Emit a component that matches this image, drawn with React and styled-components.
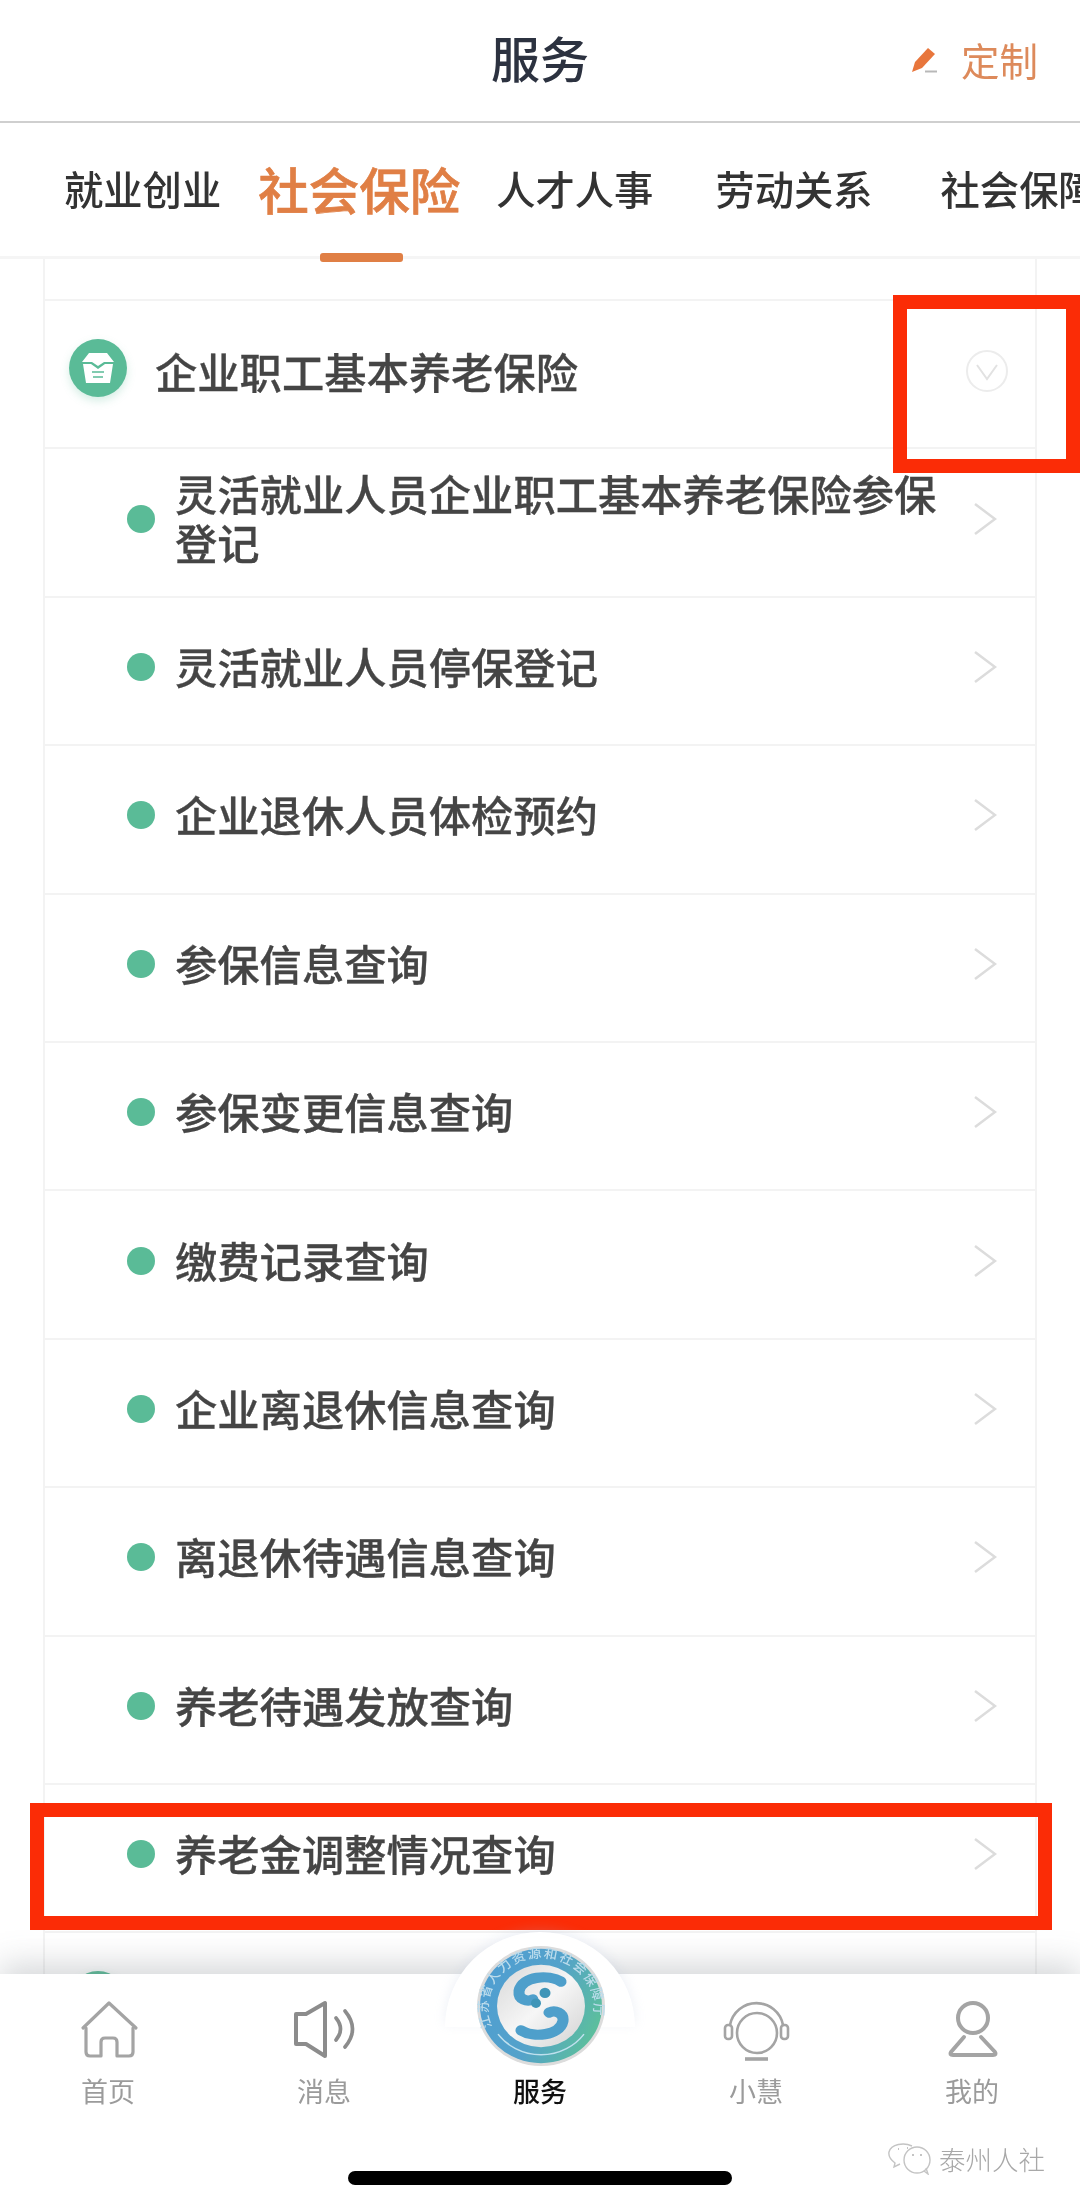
import React from "react";
import styled, { createGlobalStyle } from "styled-components";

const Global = createGlobalStyle`
  html, body { margin: 0; padding: 0; background: #fff; }
  * { box-sizing: border-box; }
  body { font-family: "Noto Sans CJK SC", "Noto Sans", sans-serif; }
`;

const Screen = styled.div`
  position: relative;
  width: 1080px;
  height: 2207px;
  overflow: hidden;
  background: #fff;
  filter: blur(0.5px);
`;

const Header = styled.header`
  position: relative;
  height: 123px;
  display: flex;
  align-items: center;
  justify-content: center;
  border-bottom: 2px solid #cfcfcf;
  padding-bottom: 8px;
`;

const Title = styled.h1`
  margin: 0;
  font-size: 49px;
  line-height: 60px;
  font-weight: 500;
  color: #2c3240;
`;

const Customize = styled.div`
  position: absolute;
  left: 911px;
  top: 33px;
  display: flex;
  align-items: center;
  gap: 24px;
  font-size: 38.5px;
  line-height: 52px;
  font-weight: 400;
  color: #dd8a5b;
`;

const TabBar = styled.nav`
  position: relative;
  height: 136px;
  border-bottom: 3px solid #f5f5f5;
`;

const TabStrip = styled.div`
  height: 100%;
  display: flex;
  align-items: center;
  padding: 0 0 3px 64px;
  overflow: hidden;
  white-space: nowrap;
`;

const Tab = styled.div`
  flex: none;
  margin-left: ${(p) => p.$gap}px;
  font-size: ${(p) => (p.$active ? 50.5 : 39.3)}px;
  line-height: 60px;
  font-weight: 500;
  -webkit-text-stroke: ${(p) => (p.$active ? 0.7 : 0)}px currentColor;
  color: ${(p) => (p.$active ? "#e07f45" : "#333")};
`;

const Indicator = styled.div`
  position: absolute;
  left: 320px;
  bottom: -6px;
  width: 83px;
  height: 9px;
  border-radius: 3px;
  background: #e07f45;
`;

const Card = styled.section`
  width: 994px;
  margin: 0 0 0 43px;
  border-left: 2px solid #f3f3f3;
  border-right: 2px solid #f3f3f3;
`;

const CardTop = styled.div`
  height: 42px;
  border-bottom: 2px solid #f3f3f3;
`;

const Row = styled.div`
  height: 148.4px;
  display: flex;
  align-items: center;
  padding: 0 38px 8px 82px;
  border-bottom: 2px solid #f3f3f3;
  font-size: 42.3px;
  line-height: 49px;
  font-weight: 500;
  -webkit-text-stroke: 0.3px currentColor;
  color: #454545;
`;

const SectionRow = styled(Row)`
  padding: 0 24px 8px 24px;
  gap: 28px;
`;

const SectionBadge = styled.span`
  flex: none;
  width: 58px;
  height: 58px;
  margin-top: -4px;
  border-radius: 50%;
  background: #5abb97;
  box-shadow: 0 4px 8px rgba(90, 187, 151, 0.25);
  display: flex;
  align-items: center;
  justify-content: center;
`;

const Dot = styled.span`
  flex: none;
  width: 28px;
  height: 28px;
  margin-right: 20px;
  border-radius: 50%;
  background: #5abb97;
`;

const Label = styled.span`
  flex: 1;
  padding-right: 16px;
  margin-bottom: 3px;
`;

const SectionLabel = styled(Label)`
  margin-bottom: 0;
`;

const Chevron = styled.svg`
  flex: none;
  width: 24px;
  height: 34px;
`;

const CircleChevron = styled.svg`
  flex: none;
  width: 44px;
  height: 44px;
  margin-top: 2px;
  margin-right: 2px;
`;

const BottomNav = styled.footer`
  position: absolute;
  left: 0;
  right: 0;
  bottom: 0;
  height: 233px;
  background: #fff;
  box-shadow: 0 -10px 30px rgba(105, 110, 120, 0.27);
`;

const Halo = styled.div`
  position: absolute;
  left: 445px;
  top: -42px;
  width: 190px;
  height: 95px;
  border-radius: 95px 95px 0 0;
  background: #fff;
  box-shadow: 0 -3px 12px rgba(170, 185, 215, 0.2);
`;

const NavGrid = styled.div`
  position: relative;
  display: grid;
  grid-template-columns: repeat(5, 216px);
  padding-top: 26px;
`;

const NavItem = styled.div`
  display: flex;
  flex-direction: column;
  align-items: center;
  gap: 13px;
  font-size: 27px;
  line-height: 36px;
  font-weight: ${(p) => (p.$active ? 500 : 400)};
  color: ${(p) => (p.$active ? "#111" : "#9b9b9b")};
`;

const NavIconBox = styled.div`
  position: relative;
  width: 64px;
  height: 60px;
`;

const NavSvg = styled.svg`
  display: block;
  overflow: visible;
`;

const LogoSvg = styled.svg`
  position: absolute;
  left: -31px;
  top: -54px;
  width: 128px;
  height: 120px;
`;

const HomeBar = styled.div`
  position: absolute;
  left: 348px;
  top: 197px;
  width: 384px;
  height: 14px;
  border-radius: 7px;
  background: #000;
`;

const Watermark = styled.div`
  position: absolute;
  left: 888px;
  top: 169px;
  display: flex;
  align-items: center;
  gap: 7px;
  font-size: 26.5px;
  line-height: 32px;
  font-weight: 300;
  color: #a8a8a8;
`;

const ChevronMark = styled.div`
  position: absolute;
  left: 893px;
  top: 295px;
  width: 187px;
  height: 178px;
  border: 14px solid #fb2c06;
`;

const RowMark = styled.div`
  position: absolute;
  left: 30px;
  top: 1803px;
  width: 1022px;
  height: 127px;
  border: 14px solid #fb2c06;
`;

const Pencil = () => (
  <svg width="26" height="30" viewBox="0 0 26 30">
    <path d="M1 28 L4 18 L17 4 L24 10 L11 24 Z" fill="#e8763c" />
    <path d="M14 27.5 H26" stroke="#b8b8b8" strokeWidth="2" />
  </svg>
);

const RowChevron = () => (
  <Chevron viewBox="0 0 24 34">
    <path d="M2 2 L22 17 L2 32" fill="none" stroke="#dcdcdc" strokeWidth="2.5" />
  </Chevron>
);

const TrayIcon = () => (
  <svg width="32" height="30" viewBox="0 0 32 30">
    <path d="M7 0 H25 L32 9 H22 L16 13 L10 9 H0 Z" fill="#fff" />
    <path d="M1 11 H9 L16 16 L23 11 H31 L28 30 H4 Z" fill="#fff" />
    <path d="M10 19 H22 M11 24 H21" stroke="#5abb97" strokeWidth="1.6" />
  </svg>
);

const HomeIcon = () => (
  <NavSvg width="64" height="60" viewBox="-2 0 64 60" fill="none" stroke="#a4a4a4" strokeWidth="3.2" strokeLinejoin="round" strokeLinecap="round">
    <path d="M5 28 L31 3 L58 28" />
    <path d="M8 28 V52 Q8 56 12 56 H23 V42 Q23 38 27 38 H35 Q39 38 39 42 V56 H51 Q55 56 55 52 V28" />
  </NavSvg>
);

const SpeakerIcon = () => (
  <NavSvg width="64" height="60" viewBox="-1 0 64 60" fill="none" stroke="#8c8c8c" strokeLinejoin="round" strokeLinecap="round">
    <path d="M3 14 H13 L32 3 V56 L13 44 H3 Z" strokeWidth="4" />
    <path d="M43 18 Q52 29 43 40" strokeWidth="3.6" />
    <path d="M52 11 Q67 29 52 47" strokeWidth="3.6" />
  </NavSvg>
);

const HeadsetIcon = () => (
  <NavSvg width="64" height="60" viewBox="-2 0 64 60" fill="none" stroke="#a4a4a4" strokeWidth="2.6" strokeLinecap="round">
    <circle cx="31" cy="33" r="20" />
    <path d="M4 25 A 27 27 0 0 1 57 25" />
    <rect x="-1" y="25" width="7" height="14" rx="3" />
    <rect x="55" y="25" width="7" height="14" rx="3" />
    <path d="M19 59 H42" strokeWidth="3.6" strokeLinecap="butt" />
  </NavSvg>
);

const PersonIcon = () => (
  <NavSvg width="64" height="60" viewBox="-2 0 64 60" fill="none" stroke="#a4a4a4" strokeWidth="4" strokeLinecap="round" strokeLinejoin="round">
    <circle cx="31" cy="18" r="15" />
    <path d="M22 37 L9 52 Q7 55 11 55 H51 Q55 55 53 52 L39 37" />
  </NavSvg>
);

const Logo = () => (
  <LogoSvg viewBox="-64 -64 128 128" preserveAspectRatio="none">
    <defs>
      <linearGradient id="ringGrad" x1="0" y1="0.2" x2="1" y2="0.6">
        <stop offset="0" stopColor="#4f9ed2" />
        <stop offset="0.55" stopColor="#54a2ca" />
        <stop offset="1" stopColor="#5cbf9c" />
      </linearGradient>
      <linearGradient id="coreGrad" x1="0" y1="0" x2="1" y2="1">
        <stop offset="0" stopColor="#d8d8d8" />
        <stop offset="0.5" stopColor="#f6f6f6" />
        <stop offset="1" stopColor="#d2d2d2" />
      </linearGradient>
      <path id="ringText" d="M -48 24 A 53 53 0 1 1 48 24" />
    </defs>
    <circle r="64" fill="#dcdcdc" />
    <circle r="61" fill="url(#ringGrad)" />
    <circle r="44" fill="url(#coreGrad)" />
    <path d="M -43 30 A 53 53 0 0 0 43 30" fill="none" stroke="#bfe0ee" strokeWidth="1.5" />
    <text fontSize="13.5" fontWeight="500" fill="#bcdcec" fontFamily="'Noto Sans CJK SC', sans-serif">
      <textPath href="#ringText" textLength="196" startOffset="2">江苏省人力资源和社会保障厅</textPath>
    </text>
    <g fill="none" stroke="#4e9fcb" strokeWidth="11" strokeLinecap="round">
      <path d="M 20 -26 C 8 -34 -19 -32 -22 -16 C -23 -7 -14 -4 -8 -7" />
      <path d="M -20 26 C -8 34 19 32 22 16 C 23 7 14 4 8 7" />
    </g>
    <circle cx="4" cy="-14" r="5.5" fill="#3f95b8" />
    <circle cx="-5" cy="-3" r="5" fill="#3f95b8" />
  </LogoSvg>
);

const Bubbles = () => (
  <svg width="44" height="32" viewBox="0 0 44 32" fill="none" stroke="#c4c4c4" strokeWidth="1.4">
    <path d="M24 3 C16 -1 3 1 1 9 C0 14 3 17 7 20 L6 24 L12 21" />
    <circle cx="29" cy="17" r="13" />
    <path d="M36 28 L40 31 L38 25" />
    <path d="M10 6 h1 M19 5 h1 M24 12 h2 M32 12 h2" strokeWidth="1.8" />
  </svg>
);

const items = [
  "灵活就业人员企业职工基本养老保险参保登记",
  "灵活就业人员停保登记",
  "企业退休人员体检预约",
  "参保信息查询",
  "参保变更信息查询",
  "缴费记录查询",
  "企业离退休信息查询",
  "离退休待遇信息查询",
  "养老待遇发放查询",
  "养老金调整情况查询",
];

const tabs = [
  { text: "就业创业", gap: 0 },
  { text: "社会保险", gap: 37 },
  { text: "人才人事", gap: 36 },
  { text: "劳动关系", gap: 62 },
  { text: "社会保障", gap: 68 },
].map((t, i) => ({ ...t, active: i === 1 }));

const navItems = [
  { text: "首页", icon: <HomeIcon /> },
  { text: "消息", icon: <SpeakerIcon /> },
  { text: "服务", icon: <Logo />, active: true },
  { text: "小慧", icon: <HeadsetIcon /> },
  { text: "我的", icon: <PersonIcon /> },
];

export default function App() {
  return (
    <>
      <Global />
      <Screen>
        <Header>
          <Title>服务</Title>
          <Customize>
            <Pencil />
            定制
          </Customize>
        </Header>
        <TabBar>
          <TabStrip>
            {tabs.map((t) => (
              <Tab key={t.text} $gap={t.gap} $active={t.active}>
                {t.text}
              </Tab>
            ))}
          </TabStrip>
          <Indicator />
        </TabBar>
        <Card>
          <CardTop />
          <SectionRow>
            <SectionBadge>
              <TrayIcon />
            </SectionBadge>
            <SectionLabel>企业职工基本养老保险</SectionLabel>
            <CircleChevron viewBox="0 0 44 44">
              <circle cx="22" cy="22" r="20" fill="none" stroke="#ececec" strokeWidth="2" />
              <path d="M12 16 L22 30 L32 16" fill="none" stroke="#e2e2e2" strokeWidth="2" />
            </CircleChevron>
          </SectionRow>
          {items.map((text) => (
            <Row key={text}>
              <Dot />
              <Label>{text}</Label>
              <RowChevron />
            </Row>
          ))}
          <SectionRow>
            <SectionBadge />
          </SectionRow>
        </Card>
        <ChevronMark />
        <RowMark />
        <BottomNav>
          <Halo />
          <NavGrid>
            {navItems.map((n) => (
              <NavItem key={n.text} $active={n.active}>
                <NavIconBox>{n.icon}</NavIconBox>
                {n.text}
              </NavItem>
            ))}
          </NavGrid>
          <HomeBar />
          <Watermark>
            <Bubbles />
            泰州人社
          </Watermark>
        </BottomNav>
      </Screen>
    </>
  );
}
